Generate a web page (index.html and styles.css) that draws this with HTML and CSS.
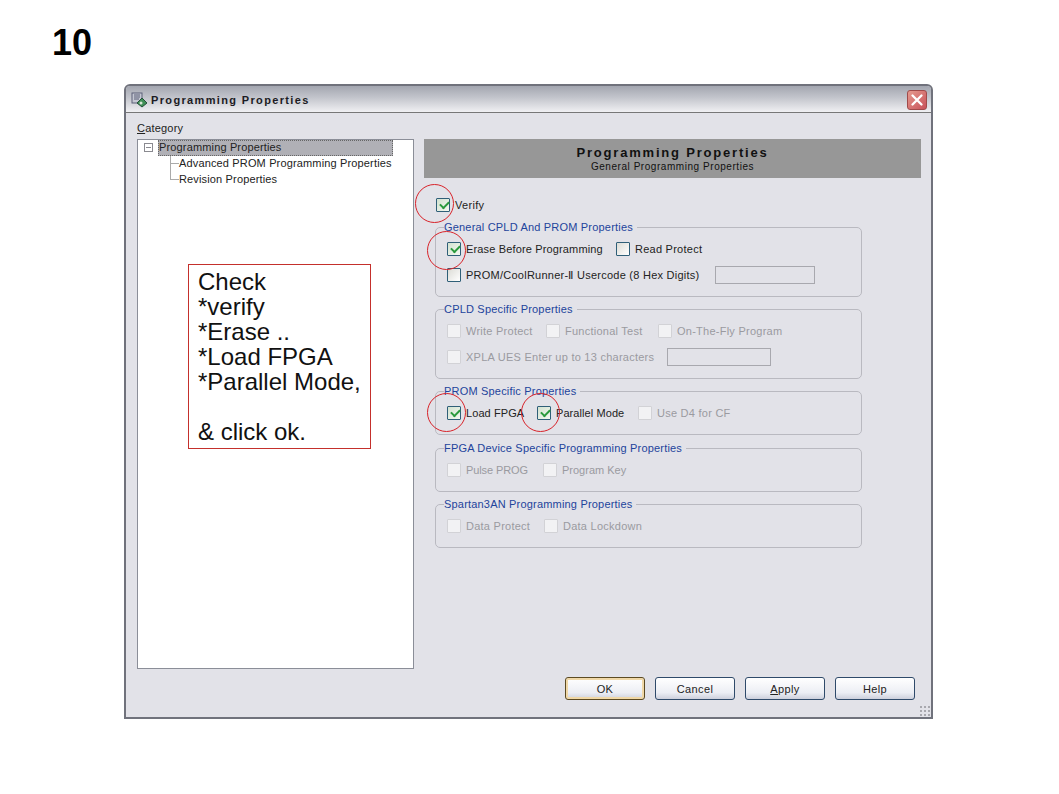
FILE: index.html
```html
<!DOCTYPE html>
<html lang="en">
<head>
<meta charset="utf-8">
<title>Programming Properties</title>
<link rel="stylesheet" href="styles.css">
</head>
<body>
<main class="slide">
  <h1 class="slide-number">10</h1>
  <section class="window">
    <header class="titlebar">
      <svg class="app-icon" width="18" height="16" viewBox="0 0 18 16">
        <rect x="1" y="1" width="10" height="10" fill="#c4c7d2" stroke="#5c6078"/>
        <path d="M3 3h6M3 5h6M3 7h5" stroke="#5c6078"/>
        <path d="M6 11l5-5 5 5-5 4z" fill="#3f8f55" stroke="#24503a"/>
        <circle cx="10" cy="11" r="1.5" fill="#d9e6d8"/>
      </svg>
      <span class="title-text">Programming Properties</span>
      <button class="close-btn" aria-label="Close">
        <svg width="20" height="20" viewBox="0 0 20 20"><path d="M5 5l10 10M15 5L5 15" stroke="#fff" stroke-width="2.6" stroke-linecap="round"/></svg>
      </button>
    </header>
    <div class="client">
      <div class="category-label"><u>C</u>ategory</div>
      <div class="columns">
        <nav class="tree">
          <div class="tree-root">
            <span class="expander"></span><span class="tree-selected">Programming Properties</span>
          </div>
          <div class="tree-child"><span class="branch"></span>Advanced PROM Programming Properties</div>
          <div class="tree-child"><span class="branch"></span>Revision Properties</div>
        </nav>
        <div class="panel">
          <div class="panel-header">
            <div class="panel-title">Programming Properties</div>
            <div class="panel-subtitle">General Programming Properties</div>
          </div>
          <label class="verify-row"><span class="check on"></span>Verify</label>

          <fieldset class="group h70">
            <legend>General CPLD And PROM Properties</legend>
            <div class="row"><span class="check on"></span><span class="lbl w-erase">Erase Before Programming</span><span class="check"></span><span class="lbl">Read Protect</span></div>
            <div class="row"><span class="check"></span><span class="lbl w-user">PROM/CoolRunner-Ⅱ Usercode (8 Hex Digits)</span><span class="textbox w100"></span></div>
          </fieldset>

          <fieldset class="group h70 off">
            <legend>CPLD Specific Properties</legend>
            <div class="row"><span class="check"></span><span class="lbl w-wp">Write Protect</span><span class="check"></span><span class="lbl w-ft">Functional Test</span><span class="check"></span><span class="lbl">On-The-Fly Program</span></div>
            <div class="row"><span class="check"></span><span class="lbl w-xpla">XPLA UES Enter up to 13 characters</span><span class="textbox w104"></span></div>
          </fieldset>

          <fieldset class="group h44 tight">
            <legend>PROM Specific Properties</legend>
            <div class="row"><span class="check on"></span><span class="lbl w-load">Load FPGA</span><span class="check on"></span><span class="lbl w-par">Parallel Mode</span><span class="check dis"></span><span class="lbl dis-text">Use D4 for CF</span></div>
          </fieldset>

          <fieldset class="group h44 off gap13">
            <legend>FPGA Device Specific Programming Properties</legend>
            <div class="row"><span class="check"></span><span class="lbl w-pulse">Pulse PROG</span><span class="check"></span><span class="lbl w-key">Program Key</span></div>
          </fieldset>

          <fieldset class="group h44 off gap12">
            <legend>Spartan3AN Programming Properties</legend>
            <div class="row"><span class="check"></span><span class="lbl w-dp">Data Protect</span><span class="check"></span><span class="lbl">Data Lockdown</span></div>
          </fieldset>
        </div>
      </div>
      <footer class="buttons">
        <button class="btn default">OK</button>
        <button class="btn">Cancel</button>
        <button class="btn"><u>A</u>pply</button>
        <button class="btn">Help</button>
      </footer>
      <div class="grip"></div>
    </div>
  </section>

  <aside class="note">Check<br>*verify<br>*Erase ..<br>*Load FPGA<br>*Parallel Mode,<br><br>&amp; click ok.</aside>
  <span class="ring ring-verify"></span>
  <span class="ring ring-erase"></span>
  <span class="ring ring-load"></span>
  <span class="ring ring-parallel"></span>
</main>
</body>
</html>
```
FILE: styles.css
```css
* { box-sizing: border-box; }
html, body { margin: 0; background: #fff; }
body { font-family: "Liberation Sans", Arial, sans-serif; }
.slide { position: relative; width: 1059px; height: 794px; overflow: hidden; padding: 0 126px 0 124px; }
.slide-number { margin: 0; height: 84px; margin-left: -72px; padding-top: 22px; font-size: 36px; line-height: 41px; font-weight: 700; color: #000; }

.window { width: 809px; height: 635px; border: 2px solid #70727c; border-radius: 6px 6px 0 0; background: #e2e2e8; display: flex; flex-direction: column; color: #222; font-size: 11px; letter-spacing: .15px; }
.titlebar { height: 27px; flex: none; display: flex; align-items: center; padding: 1px 4px 0 5px; background: linear-gradient(#a3a6b0, #c3c5cc 45%, #f0f0f3); border-bottom: 1px solid #777; border-radius: 4px 4px 0 0; }
.app-icon { flex: none; margin-right: 2px; }
.title-text { flex: 1; font-weight: 700; font-size: 11px; line-height: 13px; padding-top: 2px; letter-spacing: 1.35px; color: #1c1c24; }
.close-btn { width: 20px; height: 20px; padding: 0; border: 1px solid #a04a4a; border-radius: 3px; background: linear-gradient(135deg, #e59a8e, #c8525a); display: flex; align-items: center; justify-content: center; }

.client { position: relative; flex: 1; display: flex; flex-direction: column; padding: 8px 10px 0 11px; }
.category-label { height: 18px; line-height: 14px; letter-spacing: .2px; }
.columns { display: flex; gap: 10px; height: 530px; }

.tree { width: 277px; flex: none; background: #fff; border: 1px solid #8b8e98; }
.tree-root { height: 16px; display: flex; padding-left: 6px; }
.expander { width: 9px; height: 9px; border: 1px solid #8a8a90; margin: 3px 5px 0 0; flex: none; background: linear-gradient(#8a8a90, #8a8a90) center / 5px 1px no-repeat; }
.tree-selected { background: #b0b0b6; outline: 1px dotted #666; outline-offset: -1px; width: 235px; height: 16px; line-height: 14px; padding-left: 1px; }
.tree-child { height: 16px; display: flex; align-items: center; padding: 0 0 2px 32px; background: linear-gradient(#aaa, #aaa) 32px 0 / 1px 100% no-repeat; }
.tree-child:last-child { background-size: 1px 8px; }
.branch { width: 9px; height: 1px; flex: none; background: #aaa; }

.panel { width: 497px; flex: none; }
.panel-header { height: 39px; background: #979797; text-align: center; color: #111; padding-top: 6px; }
.panel-title { font-weight: 700; font-size: 13px; line-height: 15px; letter-spacing: 1.8px; }
.panel-subtitle { font-size: 10px; line-height: 12px; margin-top: 1px; letter-spacing: .55px; }

.verify-row { display: flex; align-items: center; height: 24px; margin-top: 15px; padding-left: 12px; letter-spacing: .3px; }
.verify-row .check { margin-right: 5px; }

.group { width: 427px; margin: 0 0 6px 11px; padding: 0 0 0 11px; border: 1px solid #b9b9c0; border-radius: 5px; min-inline-size: 0; }
.group legend { color: #22449c; padding: 0 4px 0 0; margin-left: -3px; line-height: 13px; height: 13px; letter-spacing: .19px; }
.h70 { height: 76px; }
.h44 { height: 50px; }
.tight { margin-bottom: 7px; }
.gap13 { margin-bottom: 6px; }
.gap12 { margin-bottom: 0; }
.verify-row + .group { margin-top: 4px; }

.row { display: flex; align-items: center; height: 26px; }
.group > .row:first-of-type { margin-top: 2px; }
.check { width: 14px; height: 14px; flex: none; margin-right: 5px; border: 1px solid #2f5f78; border-radius: 1px; background: linear-gradient(135deg, #dcdcd6, #fff); position: relative; }
.check.on { background: linear-gradient(135deg, #d2e2d0, #f4f8f0); }
.check.on::after { content: ""; position: absolute; left: 2.5px; top: 1.5px; width: 7px; height: 4px; border-left: 2.5px solid #2a9a3c; border-bottom: 2.5px solid #2a9a3c; transform: rotate(-45deg); }
.off { color: #9a9aa0; }
.off legend { color: #22449c; }
.off .check, .check.dis { border-color: #d2d2d6; background: #f2f2f4; }
.dis-text { color: #9a9aa0; }
.lbl { display: block; white-space: nowrap; letter-spacing: .25px; }
.textbox { height: 18px; border: 1px solid #a8a8ae; display: block; background: #e2e2e8; }
.w100 { width: 100px; }
.w104 { width: 104px; }
.lbl.w-erase { width: 150px; letter-spacing: .15px; }
.w-user { width: 249px; }
.w-wp { width: 80px; }
.w-ft { width: 93px; }
.w-xpla { width: 201px; }
.lbl.w-load { width: 71px; letter-spacing: .08px; }
.lbl.w-par { width: 82px; letter-spacing: .08px; }
.lbl.w-pulse { width: 77px; letter-spacing: -.1px; }
.lbl.w-key { letter-spacing: 0; }
.w-dp { width: 78px; }

.buttons { display: flex; justify-content: flex-end; gap: 10px; padding: 8px 6px 0 0; }
.btn { width: 80px; height: 23px; padding: 0; border: 1px solid #2f4a6a; border-radius: 3px; background: linear-gradient(#fff, #eceef4 70%, #cdd0dc); font: inherit; letter-spacing: .4px; color: #222; }
.btn.default { border-color: #5c4a22; box-shadow: inset 0 0 0 2px #f0d8a8; }
.grip { position: absolute; right: 0; bottom: 0; width: 12px; height: 12px; background: radial-gradient(#a8a8ae 1px, transparent 1.2px) 0 0 / 4px 4px; }

.note { position: absolute; left: 188px; top: 264px; width: 183px; height: 185px; padding: 4px 0 0 9px; border: 1px solid #c4302c; background: #fff; font-size: 24px; line-height: 25px; color: #111; }
.ring { position: absolute; width: 39px; height: 39px; border: 1px solid #d8232a; border-radius: 50%; }
.ring-verify { left: 415px; top: 184px; }
.ring-erase { left: 427px; top: 231px; }
.ring-load { left: 427px; top: 393px; }
.ring-parallel { left: 521px; top: 393px; }
```
